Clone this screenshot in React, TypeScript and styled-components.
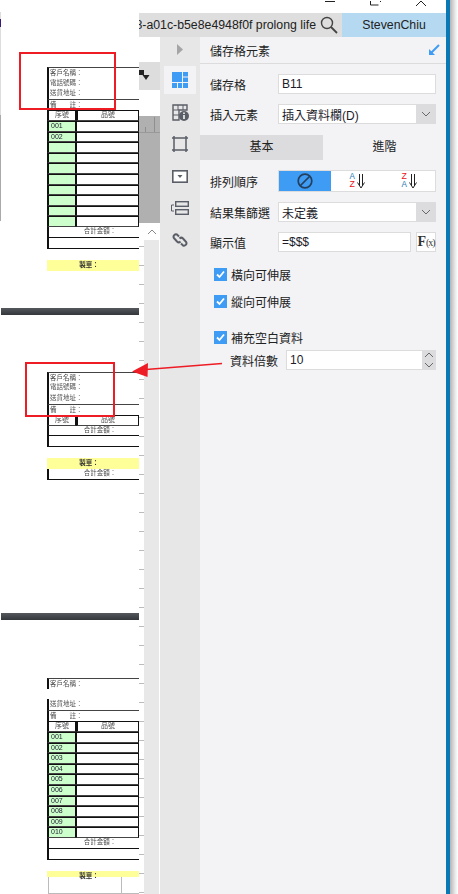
import React from 'react';
import styled, { createGlobalStyle } from 'styled-components';

const CJK = `'Liberation Sans', 'Noto Sans CJK TC', sans-serif`;
const ACCENT = '#3f9cf5';
const ICON = '#5a5e66';

const GlobalStyle = createGlobalStyle`
  html, body { margin: 0; padding: 0; background: #fff; }
  * { box-sizing: border-box; }
`;

const Screen = styled.div`
  position: relative;
  display: flex;
  width: 458px;
  height: 894px;
  overflow: hidden;
  background: #fff;
  font-family: ${CJK};
  color: #222;
`;

/* left: the report preview */
const Sheet = styled.div`
  width: 139px;
  height: 894px;
  flex: none;
  overflow: hidden;
  border-left: 1px solid;
  border-image: linear-gradient(
      #fff 0 13px, #ddd 13px 20px, #3a1a78 20px 28px, #ddd 28px 116px,
      #aaa 116px 222px, #fff 222px
    ) 1;
  padding-top: 67px;
`;

const Report = styled.div`
  margin-left: 46px;
  width: 92px;
  font-size: 6.5px;
  line-height: 9px;
  color: #4c4c4c;
  filter: blur(0.25px);
`;

const InfoRow = styled.div<{ $first?: boolean; $hollow?: boolean; $ruled?: boolean }>`
  height: ${p => (p.$ruled ? 11 : 10.7)}px;
  padding-left: 1px;
  border-left: 2px solid ${p => (p.$hollow ? 'transparent' : '#111')};
  border-top: ${p => (p.$first || p.$ruled ? '1px solid #444' : '0')};
  white-space: nowrap;
`;

const TableRow = styled.div<{ $h?: number }>`
  display: grid;
  grid-template-columns: 29px 63px;
  height: ${p => p.$h ?? 10.6}px;
`;

const Cell = styled.div<{ $green?: boolean; $center?: boolean }>`
  border: 1px solid #111;
  border-left-width: ${p => (p.$green || p.$center ? 2 : 1)}px;
  border-bottom-color: #444;
  background: ${p => (p.$green ? '#ccffcc' : '#fff')};
  padding-left: ${p => (p.$center ? 0 : 2)}px;
  text-align: ${p => (p.$center ? 'center' : 'left')};
  font-size: 7px;
  line-height: 8px;
  color: ${p => (p.$green ? '#223' : '#4c4c4c')};
`;

const TotalRow = styled.div`
  height: 10.8px;
  border-left: 2px solid #111;
  border-bottom: 1px solid #111;
  text-align: center;
  line-height: 8px;
  padding-left: 12px;
`;

const MakerRow = styled.div<{ $h?: number }>`
  height: ${p => p.$h ?? 11}px;
  margin-top: 11px;
  background: #ffff99;
  color: #333;
  line-height: 9px;
  text-align: center;
  padding-right: 8px;
  font-weight: 700;
`;

const Band = styled.div<{ $before: number; $after: number }>`
  height: 7px;
  margin: ${p => p.$before}px 0 ${p => p.$after}px;
  background: linear-gradient(#55585c, #33363a);
`;

const FooterCells = styled.div`
  display: grid;
  grid-template-columns: 1px 72px 1px;
  height: 17px;
  margin-left: 47px;
  margin-right: -92px;
  border-bottom: 1px solid #bbb;
  & > i { background: #bbb; }
`;

/* middle and right */
const Main = styled.div`
  width: 311px;
  flex: none;
  display: flex;
  flex-direction: column;
  border-right: 4px solid #0a78b4;
`;

const WindowBar = styled.div`
  height: 13px;
  flex: none;
  overflow: hidden;
`;

const TitleBar = styled.div`
  height: 24px;
  flex: none;
  display: flex;
  align-items: center;
  background: #dedede;
`;

const TitleText = styled.div`
  flex: 1;
  min-width: 0;
  display: flex;
  justify-content: flex-end;
  overflow: hidden;
  white-space: nowrap;
  font-size: 12.3px;
  color: #222;
`;

const SearchButton = styled.div`
  width: 26px;
  display: flex;
  justify-content: center;
  flex: none;
`;

const UserTab = styled.div`
  width: 104px;
  height: 24px;
  flex: none;
  background: #b5d9f0;
  text-align: center;
  font-size: 12.3px;
  line-height: 24px;
`;

const Body = styled.div`
  flex: 1;
  display: flex;
  min-height: 0;
`;

const Middle = styled.div`
  width: 21px;
  flex: none;
  display: flex;
  flex-direction: column;
`;

const WhiteStrip = styled.div<{ $h: number }>`
  height: ${p => p.$h}px;
  flex: none;
`;

const ToolStrip = styled.div`
  height: 28px;
  flex: none;
  background: #dddddd;
  padding-top: 8px;
`;

const GrayArea = styled.div`
  height: 107px;
  flex: none;
  background: #b0b0b0;
`;

const Ruler = styled.div`
  height: 17px;
  border-bottom: 1px solid #999;
  background:
    linear-gradient(#8f8f8f, #8f8f8f) 6px 11px / 1px 5px no-repeat,
    linear-gradient(#8f8f8f, #8f8f8f) 15px 1px / 1px 15px no-repeat;
`;

const ScrollRow = styled.div`
  flex: 1;
  display: flex;
`;

const Gutter = styled.div`
  width: 5px;
  flex: none;
  background: repeating-linear-gradient(#fff 0 18px, #bbb 18px 19px) 0 5px;
`;

const ScrollTrack = styled.div`
  flex: 1;
  background: #e8e8e8;
  border-right: 1px solid #fff;
`;

const ScrollUp = styled.div`
  height: 17px;
  background: #fff;
  display: flex;
  align-items: center;
  justify-content: center;
`;

const IconBar = styled.div`
  width: 40px;
  flex: none;
  background: #e7e7e8;
  display: flex;
  flex-direction: column;
  align-items: center;
`;

const Collapse = styled.div`
  height: 24px;
  margin-bottom: 5px;
  display: flex;
  align-items: center;
  justify-content: center;
`;

const IconSlot = styled.div<{ $active?: boolean }>`
  width: 32px;
  height: 28px;
  margin-bottom: 4px;
  display: flex;
  align-items: center;
  justify-content: center;
  background: ${p => (p.$active ? '#f3f3f6' : 'transparent')};
`;

const Panel = styled.div`
  width: 246px;
  flex: none;
  background: #f3f3f6;
  font-size: 12px;
`;

const PanelHeader = styled.div`
  height: 27px;
  padding: 0 6px 0 10px;
  display: flex;
  align-items: center;
  justify-content: space-between;
  border-bottom: 1px solid #dcdcdc;
`;

const Form = styled.div`
  padding: 10px 10px 11px;
  display: flex;
  flex-direction: column;
  gap: 10px;
`;

const Row = styled.div`
  display: flex;
  align-items: center;
`;

const Label = styled.div`
  width: 68px;
  flex: none;
  white-space: nowrap;
`;

const Field = styled.div`
  flex: 1;
  min-width: 0;
  height: 20px;
  display: flex;
  align-items: center;
  background: #fff;
  border: 1px solid #dcdcdc;
  padding-left: 3px;
  font-size: 12px;
  color: #1c1c2a;
`;

const FieldValue = styled.div`
  flex: 1;
  font-size: 12px;
  white-space: nowrap;
`;

const DropButton = styled.div`
  width: 20px;
  height: 20px;
  margin-right: -1px;
  flex: none;
  background: #dcdcde;
  display: flex;
  align-items: center;
  justify-content: center;
`;

const Tabs = styled.div`
  display: flex;
  height: 25px;
`;

const Tab = styled.div<{ $active?: boolean }>`
  flex: 1;
  text-align: center;
  line-height: 25px;
  background: ${p => (p.$active ? '#dcdcde' : 'transparent')};
`;

const Segments = styled.div`
  flex: 1;
  height: 22px;
  display: flex;
  background: #fff;
  border: 1px solid #dcdcdc;
`;

const Segment = styled.div<{ $active?: boolean }>`
  flex: 1;
  display: flex;
  align-items: center;
  justify-content: center;
  gap: 1px;
  background: ${p => (p.$active ? ACCENT : 'transparent')};
`;

const SortLetters = styled.div`
  display: flex;
  flex-direction: column;
  font-family: 'Liberation Mono', monospace;
  font-size: 9px;
  width: 6px;
`;

const SortLetter = styled.div<{ $red?: boolean }>`
  height: 8px;
  line-height: 8px;
  color: ${p => (p.$red ? '#e8151b' : '#2f7fb5')};
`;

const FxButton = styled.div`
  width: 20px;
  height: 20px;
  margin-left: 5px;
  flex: none;
  border: 1px solid #dcdcdc;
  background: #fff;
  display: flex;
  align-items: baseline;
  justify-content: center;
  font-family: 'Liberation Serif', serif;
  color: #333;
  font-size: 14px;
  line-height: 17px;
  font-weight: 700;
  & > small { font-size: 10px; font-weight: 400; letter-spacing: -1px; }
`;

const Checks = styled.div`
  padding: 5px 14px 0;
  display: flex;
  flex-direction: column;
`;

const CheckRow = styled.div<{ $gap: number }>`
  display: flex;
  align-items: center;
  gap: 4px;
  margin-bottom: ${p => p.$gap}px;
  height: 13px;
  white-space: nowrap;
`;

const CheckBox = styled.div`
  width: 13px;
  height: 13px;
  flex: none;
  background: ${ACCENT};
  display: flex;
  align-items: center;
  justify-content: center;
`;

const MultiplierRow = styled.div`
  display: flex;
  align-items: center;
  margin: 6px 10px 0 30px;
`;

const MultiplierLabel = styled.div`
  width: 56px;
  flex: none;
  white-space: nowrap;
`;

const Spinner = styled.div`
  width: 14px;
  height: 20px;
  margin-right: -1px;
  flex: none;
  background: #dcdcde;
  display: flex;
  flex-direction: column;
  align-items: center;
  justify-content: space-around;
`;

const WindowShadow = styled.div`
  width: 8px;
  height: 894px;
  flex: none;
  background: linear-gradient(90deg, #b4b4b4, #e6e6e6 60%, #fff);
`;

const Overlay = styled.svg`
  position: absolute;
  left: 0;
  top: 0;
  pointer-events: none;
`;

const Chevron = () => (
  <svg width="10" height="6" viewBox="0 0 10 6">
    <path d="M1 1l4 4 4-4" fill="none" stroke="#66686e" strokeWidth="1" />
  </svg>
);

const Info = ({ phone = true }: { phone?: boolean }) => (
  <>
    <InfoRow $first>客戶名稱：</InfoRow>
    <InfoRow $hollow={!phone}>{phone ? '電話號碼：' : ''}</InfoRow>
    <InfoRow>送貨地址：</InfoRow>
    <InfoRow $ruled>備　　註：</InfoRow>
  </>
);

const HeaderRow = () => (
  <TableRow $h={11}>
    <Cell $center>序號</Cell>
    <Cell $center>品號</Cell>
  </TableRow>
);

const DataRows = ({ codes }: { codes: string[] }) => (
  <>
    {codes.map((code, i) => (
      <TableRow key={i}>
        <Cell $green>{code}</Cell>
        <Cell />
      </TableRow>
    ))}
  </>
);

const SortOption = ({ top, bottom, topRed }: { top: string; bottom: string; topRed?: boolean }) => (
  <Segment>
    <SortLetters>
      <SortLetter $red={topRed}>{top}</SortLetter>
      <SortLetter $red={!topRed}>{bottom}</SortLetter>
    </SortLetters>
    <svg width="8" height="15" viewBox="0 0 8 15" fill="none" stroke="#222">
      <path d="M2.5 0v12M5.5 0v12" />
      <path d="M0.5 8.5L4 14l3.5-5.5" />
    </svg>
  </Segment>
);

const Check = ({ label, gap }: { label: string; gap: number }) => (
  <CheckRow $gap={gap}>
    <CheckBox>
      <svg width="11" height="11" viewBox="0 0 11 11">
        <path d="M2 5.5l2.5 2.5L9 2.5" fill="none" stroke="#fff" strokeWidth="1.8" />
      </svg>
    </CheckBox>
    {label}
  </CheckRow>
);

const firstCodes = ['001', '002', '', '', '', '', '', '', '', ''];
const allCodes = ['001', '002', '003', '004', '005', '006', '007', '008', '009', '010'];

export default function App() {
  return (
    <Screen>
      <GlobalStyle />
      <Sheet>
        <Report>
          <Info />
          <HeaderRow />
          <DataRows codes={firstCodes} />
          <TotalRow>合計金額：</TotalRow>
          <TotalRow />
          <MakerRow>製單：</MakerRow>
        </Report>
        <Band $before={37} $after={57} />
        <Report>
          <Info />
          <HeaderRow />
          <TotalRow>合計金額：</TotalRow>
          <TotalRow />
          <MakerRow>製單：</MakerRow>
          <TotalRow>合計金額：</TotalRow>
        </Report>
        <Band $before={133} $after={58} />
        <Report>
          <Info phone={false} />
          <HeaderRow />
          <DataRows codes={allCodes} />
          <TotalRow>合計金額：</TotalRow>
          <TotalRow />
          <MakerRow $h={6}>製單：</MakerRow>
        </Report>
        <FooterCells>
          <i />
          <span />
          <i />
        </FooterCells>
      </Sheet>

      <Main>
        <WindowBar>
          <svg width="307" height="13" viewBox="139 0 307 13">
            <path d="M325 0.5h10" stroke="#222" />
            <path d="M370.5 -3v7h8M380.5 -5v6" fill="none" stroke="#222" />
            <path d="M421 0l-5 5M421 0l5 5" fill="none" stroke="#222" />
          </svg>
        </WindowBar>
        <TitleBar>
          <TitleText>8-a01c-b5e8e4948f0f prolong life</TitleText>
          <SearchButton>
            <svg width="18" height="18" viewBox="0 0 18 18">
              <circle cx="7" cy="7" r="5.5" fill="none" stroke="#444" strokeWidth="1.4" />
              <path d="M11 11l6 6" stroke="#444" strokeWidth="1.8" />
            </svg>
          </SearchButton>
          <UserTab>StevenChiu</UserTab>
        </TitleBar>
        <Body>
          <Middle>
            <WhiteStrip $h={25} />
            <ToolStrip>
              <svg width="11" height="11" viewBox="0 0 11 11" style={{ display: 'block' }}>
                <path d="M0 0h5v5H0z" fill="#222" />
                <path d="M3.5 5h7L7 10z" fill="#222" />
              </svg>
            </ToolStrip>
            <WhiteStrip $h={26} />
            <GrayArea>
              <Ruler />
            </GrayArea>
            <ScrollRow>
              <Gutter />
              <ScrollTrack>
                <ScrollUp>
                  <svg width="10" height="6" viewBox="0 0 10 6">
                    <path d="M1 5l4-4 4 4" fill="none" stroke="#888" />
                  </svg>
                </ScrollUp>
              </ScrollTrack>
            </ScrollRow>
          </Middle>

          <IconBar>
            <Collapse>
              <svg width="6" height="11" viewBox="0 0 6 11">
                <path d="M0 0l6 5.5L0 11z" fill="#a5a5a8" />
              </svg>
            </Collapse>
            <IconSlot $active>
              <svg width="16" height="16" viewBox="0 0 16 16" fill={ACCENT}>
                <rect x="0" y="0" width="10" height="10" />
                <rect x="11" y="0" width="5" height="4.5" />
                <rect x="11" y="5.5" width="5" height="4.5" />
                <rect x="0" y="11" width="5" height="5" />
                <rect x="6" y="11" width="4" height="5" />
                <rect x="11" y="11" width="5" height="5" />
              </svg>
            </IconSlot>
            <IconSlot>
              <svg width="17" height="17" viewBox="0 0 17 17">
                <path d="M1 1h14v5H7v10H1z" fill="none" stroke={ICON} strokeWidth="1.4" />
                <path d="M1 6h6M1 11h6M6 1v5M11 1v5" stroke={ICON} />
                <circle cx="12" cy="12" r="5" fill={ICON} />
                <path d="M12 8.5v1.6M12 11v4" stroke="#fff" strokeWidth="1.5" />
              </svg>
            </IconSlot>
            <IconSlot>
              <svg width="16" height="16" viewBox="0 0 16 16" fill="none" stroke={ICON} strokeWidth="1.5">
                <path d="M2 0v16M14 0v16M0 2h16M0 14h16" />
              </svg>
            </IconSlot>
            <IconSlot>
              <svg width="16" height="13" viewBox="0 0 16 13">
                <rect x="0.8" y="0.8" width="14.4" height="11.4" fill="#fff" stroke={ICON} strokeWidth="1.6" />
                <path d="M5.5 5h5L8 8z" fill={ICON} />
              </svg>
            </IconSlot>
            <IconSlot>
              <svg width="18" height="14" viewBox="0 0 18 14" fill="none" stroke={ICON}>
                <rect x="4.7" y="0.7" width="12.6" height="4.6" strokeWidth="1.4" />
                <rect x="4.7" y="8.7" width="12.6" height="4.6" strokeWidth="1.4" />
                <path d="M3 4H0.5v6H3" />
              </svg>
            </IconSlot>
            <IconSlot>
              <svg width="16" height="16" viewBox="0 0 16 16" fill="none" stroke={ICON} strokeWidth="2">
                <path d="M7 4.5L5 2.5a2.5 2.5 0 0 0-3.2 3.4L5 9.5a2.5 2.5 0 0 0 3.5 0" />
                <path d="M9 11.5l2 2a2.5 2.5 0 0 0 3.2-3.4L11 6.5a2.5 2.5 0 0 0-3.5 0" />
              </svg>
            </IconSlot>
          </IconBar>

          <Panel>
            <PanelHeader>
              儲存格元素
              <svg width="12" height="12" viewBox="0 0 12 12">
                <path d="M11 1L3 9" stroke={ACCENT} strokeWidth="2" />
                <path d="M1 5v6h6z" fill={ACCENT} />
              </svg>
            </PanelHeader>
            <Form>
              <Row>
                <Label>儲存格</Label>
                <Field><FieldValue>B11</FieldValue></Field>
              </Row>
              <Row>
                <Label>插入元素</Label>
                <Field>
                  <FieldValue>插入資料欄(D)</FieldValue>
                  <DropButton><Chevron /></DropButton>
                </Field>
              </Row>
            </Form>
            <Tabs>
              <Tab $active>基本</Tab>
              <Tab>進階</Tab>
            </Tabs>
            <Form>
              <Row>
                <Label>排列順序</Label>
                <Segments>
                  <Segment $active>
                    <svg width="16" height="16" viewBox="0 0 16 16" fill="none" stroke="#24405e" strokeWidth="1.7">
                      <circle cx="8" cy="8" r="6.8" />
                      <path d="M3.5 12.5l9-9" />
                    </svg>
                  </Segment>
                  <SortOption top="A" bottom="Z" />
                  <SortOption top="Z" bottom="A" topRed />
                </Segments>
              </Row>
              <Row>
                <Label>結果集篩選</Label>
                <Field>
                  <FieldValue>未定義</FieldValue>
                  <DropButton><Chevron /></DropButton>
                </Field>
              </Row>
              <Row>
                <Label>顯示值</Label>
                <Field><FieldValue>=$$$</FieldValue></Field>
                <FxButton>F<small>(x)</small></FxButton>
              </Row>
            </Form>
            <Checks>
              <Check label="橫向可伸展" gap={14} />
              <Check label="縱向可伸展" gap={23} />
              <Check label="補充空白資料" gap={0} />
            </Checks>
            <MultiplierRow>
              <MultiplierLabel>資料倍數</MultiplierLabel>
              <Field>
                <FieldValue>10</FieldValue>
                <Spinner>
                  <svg width="10" height="6" viewBox="0 0 10 6">
                    <path d="M1 5l4-4 4 4" fill="none" stroke="#66686e" />
                  </svg>
                  <Chevron />
                </Spinner>
              </Field>
            </MultiplierRow>
          </Panel>
        </Body>
      </Main>
      <WindowShadow />

      <Overlay width="458" height="894" viewBox="0 0 458 894">
        <rect x="20" y="53" width="95" height="56" fill="none" stroke="#ee1c25" strokeWidth="2" />
        <rect x="26" y="363" width="88" height="53" fill="none" stroke="#ee1c25" strokeWidth="2" />
        <path d="M146 369.5L222 363.5" stroke="#ee1c25" strokeWidth="1.6" />
        <path d="M132 371.5L148 363l-.5 14z" fill="#ee1c25" />
      </Overlay>
    </Screen>
  );
}
